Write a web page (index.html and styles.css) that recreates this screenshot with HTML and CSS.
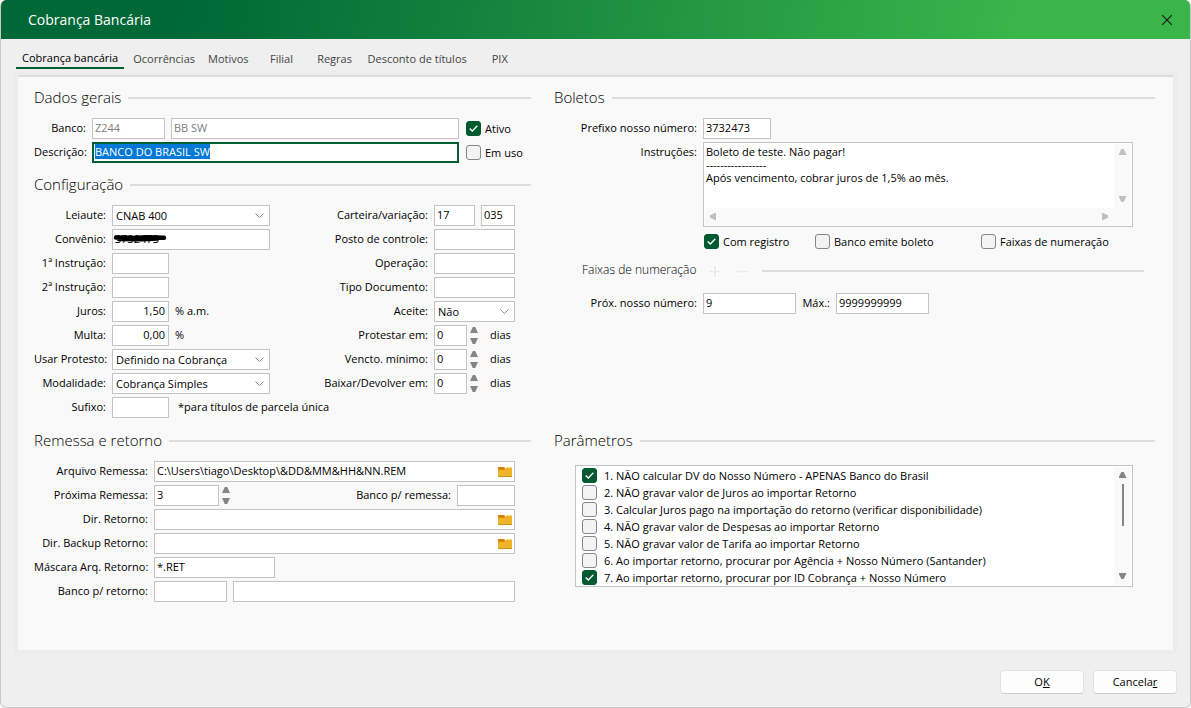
FILE: index.html
```html
<!DOCTYPE html>
<html lang="pt-BR">
<head>
  <meta charset="UTF-8">
  <meta name="viewport" content="width=device-width, initial-scale=1">
  <title>Cobrança Bancária</title>
  <link rel="stylesheet" href="styles.css">
</head>
<body>
  <div class="dialog">

    <!-- Title bar -->
    <header class="title-bar">
      <h1>Cobrança Bancária</h1>
      <button class="close" type="button" aria-label="Fechar">
        <svg width="10" height="10" viewBox="0 0 10 10"><path d="M0 0L10 10M10 0L0 10" stroke="#1c1c1c" stroke-width="1.2"/></svg>
      </button>
    </header>

    <!-- Tabs -->
    <nav class="tabs">
      <button type="button" class="tab active">Cobrança bancária</button>
      <button type="button" class="tab">Ocorrências</button>
      <button type="button" class="tab">Motivos</button>
      <button type="button" class="tab">Filial</button>
      <button type="button" class="tab">Regras</button>
      <button type="button" class="tab">Desconto de títulos</button>
      <button type="button" class="tab">PIX</button>
    </nav>

    <main class="panel">
      <div class="column">
        <section class="dados">
          <h2>Dados gerais</h2>
          <div class="rows">
            <div class="row">
              <label for="banco">Banco:</label>
              <input id="banco" class="w-73" type="text" value="Z244" disabled>
              <input class="grow" type="text" value="BB SW" aria-label="Nome do banco" disabled>
              <label class="check"><input type="checkbox" checked>Ativo</label>
            </div>
            <div class="row">
              <label for="descricao">Descrição:</label>
              <input id="descricao" class="grow" type="text" value="BANCO DO BRASIL SW">
              <label class="check"><input type="checkbox">Em uso</label>
            </div>
          </div>
        </section>

        <section class="config">
          <h2>Configuração</h2>
          <div class="split">
            <div class="rows">
              <div class="row">
                <label for="leiaute">Leiaute:</label>
                <select id="leiaute" class="w-158"><option>CNAB 400</option></select>
              </div>
              <div class="row">
                <label for="convenio">Convênio:</label>
                <div class="marked">
                  <input id="convenio" class="w-158" type="text" value="3732473">
                  <svg class="scribble" width="54" height="8" viewBox="0 0 54 8"><path d="M3 3.5L20 4L34 3.2L51 3.8M6 5L30 5.2L44 4.6" fill="none" stroke="#000" stroke-width="4.4" stroke-linecap="round"/></svg>
                </div>
              </div>
              <div class="row">
                <label for="instr1">1ª Instrução:</label>
                <input id="instr1" class="w-57" type="text">
              </div>
              <div class="row">
                <label for="instr2">2ª Instrução:</label>
                <input id="instr2" class="w-57" type="text">
              </div>
              <div class="row">
                <label for="juros">Juros:</label>
                <input id="juros" class="w-57 number" type="text" value="1,50">
                <span>% a.m.</span>
              </div>
              <div class="row">
                <label for="multa">Multa:</label>
                <input id="multa" class="w-57 number" type="text" value="0,00">
                <span>%</span>
              </div>
              <div class="row">
                <label for="protesto">Usar Protesto:</label>
                <select id="protesto" class="w-158"><option>Definido na Cobrança</option></select>
              </div>
              <div class="row">
                <label for="modalidade">Modalidade:</label>
                <select id="modalidade" class="w-158"><option>Cobrança Simples</option></select>
              </div>
              <div class="row">
                <label for="sufixo">Sufixo:</label>
                <input id="sufixo" class="w-57" type="text">
                <span class="note">*para títulos de parcela única</span>
              </div>
            </div>

            <div class="rows second">
              <div class="row">
                <label for="carteira">Carteira/variação:</label>
                <input id="carteira" class="w-41" type="text" value="17">
                <input class="grow" type="text" value="035" aria-label="Variação">
              </div>
              <div class="row">
                <label for="posto">Posto de controle:</label>
                <input id="posto" class="grow" type="text">
              </div>
              <div class="row">
                <label for="operacao">Operação:</label>
                <input id="operacao" class="grow" type="text">
              </div>
              <div class="row">
                <label for="tipo">Tipo Documento:</label>
                <input id="tipo" class="grow" type="text">
              </div>
              <div class="row">
                <label for="aceite">Aceite:</label>
                <select id="aceite" class="grow"><option>Não</option></select>
              </div>
              <div class="row">
                <label for="protestar">Protestar em:</label>
                <div class="spin">
                  <input id="protestar" class="w-33" type="text" value="0">
                  <div class="arrows">
                    <button type="button" class="up" aria-label="Aumentar"></button>
                    <button type="button" class="down" aria-label="Diminuir"></button>
                  </div>
                </div>
                <span class="unit">dias</span>
              </div>
              <div class="row">
                <label for="vencto">Vencto. mínimo:</label>
                <div class="spin">
                  <input id="vencto" class="w-33" type="text" value="0">
                  <div class="arrows">
                    <button type="button" class="up" aria-label="Aumentar"></button>
                    <button type="button" class="down" aria-label="Diminuir"></button>
                  </div>
                </div>
                <span class="unit">dias</span>
              </div>
              <div class="row">
                <label for="baixar">Baixar/Devolver em:</label>
                <div class="spin">
                  <input id="baixar" class="w-33" type="text" value="0">
                  <div class="arrows">
                    <button type="button" class="up" aria-label="Aumentar"></button>
                    <button type="button" class="down" aria-label="Diminuir"></button>
                  </div>
                </div>
                <span class="unit">dias</span>
              </div>
            </div>
          </div>
        </section>
      </div>

      <div class="column">
        <section class="boletos">
          <h2>Boletos</h2>
          <div class="rows">
            <div class="row">
              <label for="prefixo">Prefixo nosso número:</label>
              <input id="prefixo" class="w-68" type="text" value="3732473">
            </div>
            <div class="row top">
              <label for="instrucoes">Instruções:</label>
              <div class="memo">
                <textarea id="instrucoes" wrap="off">Boleto de teste. Não pagar!
-----------------
Após vencimento, cobrar juros de 1,5% ao mês.</textarea>
                <div class="scroll vertical light">
                  <button type="button" class="up" aria-label="Rolar para cima"></button>
                  <button type="button" class="down" aria-label="Rolar para baixo"></button>
                </div>
                <div class="scroll horizontal light">
                  <button type="button" class="left" aria-label="Rolar para a esquerda"></button>
                  <button type="button" class="right" aria-label="Rolar para a direita"></button>
                </div>
              </div>
            </div>
          </div>
          <div class="options">
            <label class="check"><input type="checkbox" checked>Com registro</label>
            <label class="check"><input type="checkbox">Banco emite boleto</label>
            <label class="check"><input type="checkbox">Faixas de numeração</label>
          </div>
          <h3>
            Faixas de numeração
            <svg class="tools" width="42" height="14" viewBox="0 0 42 14"><path d="M7 1V14M0 7.500H14M27 7.500H41" fill="none" stroke="#fff" stroke-width="4"/><path d="M7 2V13M1 7.500H13M28 7.500H40" fill="none" stroke="#ebebeb" stroke-width="2"/></svg>
          </h3>
          <div class="row">
            <label for="proximo">Próx. nosso número:</label>
            <input id="proximo" class="w-93" type="text" value="9">
            <label class="inline" for="maximo">Máx.:</label>
            <input id="maximo" class="w-93" type="text" value="9999999999">
          </div>
        </section>
      </div>

      <section class="remessa">
        <h2>Remessa e retorno</h2>
        <div class="rows">
          <div class="row">
            <label for="arquivo">Arquivo Remessa:</label>
            <div class="path">
              <input id="arquivo" type="text" value="C:\Users\tiago\Desktop\&amp;DD&amp;MM&amp;HH&amp;NN.REM">
              <button type="button" aria-label="Procurar arquivo"><svg width="14" height="11" viewBox="0 0 14 11"><path d="M0 1H6L7 2V5H0Z" fill="#d97f0c"/><path d="M0 4H6L8.500 1.500H14V10.200H0Z" fill="#edb52a"/><path d="M0 10.500H14" stroke="#c98f14"/></svg></button>
            </div>
          </div>
          <div class="row">
            <label for="proxima">Próxima Remessa:</label>
            <div class="spin">
              <input id="proxima" class="w-65" type="text" value="3">
              <div class="arrows">
                <button type="button" class="up" aria-label="Aumentar"></button>
                <button type="button" class="down" aria-label="Diminuir"></button>
              </div>
            </div>
            <label class="inline push" for="banco-remessa">Banco p/ remessa:</label>
            <input id="banco-remessa" class="w-58" type="text">
          </div>
          <div class="row">
            <label for="dir-retorno">Dir. Retorno:</label>
            <div class="path">
              <input id="dir-retorno" type="text">
              <button type="button" aria-label="Procurar pasta"><svg width="14" height="11" viewBox="0 0 14 11"><path d="M0 1H6L7 2V5H0Z" fill="#d97f0c"/><path d="M0 4H6L8.500 1.500H14V10.200H0Z" fill="#edb52a"/><path d="M0 10.500H14" stroke="#c98f14"/></svg></button>
            </div>
          </div>
          <div class="row">
            <label for="dir-backup">Dir. Backup Retorno:</label>
            <div class="path">
              <input id="dir-backup" type="text">
              <button type="button" aria-label="Procurar pasta"><svg width="14" height="11" viewBox="0 0 14 11"><path d="M0 1H6L7 2V5H0Z" fill="#d97f0c"/><path d="M0 4H6L8.500 1.500H14V10.200H0Z" fill="#edb52a"/><path d="M0 10.500H14" stroke="#c98f14"/></svg></button>
            </div>
          </div>
          <div class="row">
            <label for="mascara">Máscara Arq. Retorno:</label>
            <input id="mascara" class="w-121" type="text" value="*.RET">
          </div>
          <div class="row">
            <label for="banco-retorno">Banco p/ retorno:</label>
            <input id="banco-retorno" class="w-73" type="text">
            <input class="grow" type="text" aria-label="Nome do banco de retorno">
          </div>
        </div>
      </section>

      <section class="parametros">
        <h2>Parâmetros</h2>
        <div class="list">
          <div class="items">
            <label class="check"><input type="checkbox" checked>1. NÃO calcular DV do Nosso Número - APENAS Banco do Brasil</label>
            <label class="check"><input type="checkbox">2. NÃO gravar valor de Juros ao importar Retorno</label>
            <label class="check"><input type="checkbox">3. Calcular Juros pago na importação do retorno (verificar disponibilidade)</label>
            <label class="check"><input type="checkbox">4. NÃO gravar valor de Despesas ao importar Retorno</label>
            <label class="check"><input type="checkbox">5. NÃO gravar valor de Tarifa ao importar Retorno</label>
            <label class="check"><input type="checkbox">6. Ao importar retorno, procurar por Agência + Nosso Número (Santander)</label>
            <label class="check"><input type="checkbox" checked>7. Ao importar retorno, procurar por ID Cobrança + Nosso Número</label>
          </div>
          <div class="scroll vertical">
            <button type="button" class="up" aria-label="Rolar para cima"></button>
            <div class="thumb"></div>
            <button type="button" class="down" aria-label="Rolar para baixo"></button>
          </div>
        </div>
      </section>
    </main>

    <footer class="actions">
      <button type="button">O<u>K</u></button>
      <button type="button">Cancela<u>r</u></button>
    </footer>
  </div>

  <script src="script.js"></script>
</body>
</html>
```

FILE: styles.css
```css
* {
  box-sizing: border-box;
}

body {
  margin: 0;
  background: #fff;
  color: #000;
  font-family: "Open Sans", "Noto Sans", sans-serif;
  font-size: 11px;
  line-height: 13px;
}

button,
input,
select,
textarea {
  margin: 0;
  font: inherit;
  color: inherit;
}

button {
  padding: 0;
  border: 0;
  background: none;
}

.dialog {
  min-height: 100vh;
  display: flex;
  flex-direction: column;
  background: #efefef;
  border: solid #c8c8c8;
  border-width: 0 1px 1px;
  border-radius: 6px;
  overflow: hidden;
}

.title-bar {
  height: 39px;
  margin: 0 -1px;
  padding: 0 19px 0 28px;
  display: flex;
  align-items: center;
  justify-content: space-between;
  background: linear-gradient(100deg, #006736 15%, #39b54a 85%);
}

.title-bar h1 {
  margin: 0;
  color: #fff;
  font-size: 14px;
  line-height: 20px;
  font-weight: 400;
}

.close svg {
  display: block;
}

/* Tabs */
.tabs {
  display: flex;
  gap: 1px;
  padding: 9px 15px 0;
  height: 36px;
}

.tab {
  min-width: 52px;
  height: 21px;
  padding: 0 6px;
  color: #444;
}

.tab.active {
  margin-right: 2px;
  color: #000;
  border-bottom: 2px solid #005f33;
}

/* Panel */
.panel {
  flex: 1;
  margin: 0 17px;
  padding: 9px 18px 16px 16px;
  display: grid;
  grid-template-columns: 497px minmax(0, 1fr);
  grid-template-rows: auto 1fr;
  gap: 11px 23px;
  background: #f9f9f9;
  border-top: 2px solid #ddd;
  box-shadow: 0 0 0 4px #ececec;
}

.column {
  display: flex;
  flex-direction: column;
  gap: 10px;
}

h2,
h3 {
  margin: 0 0 8px;
  display: flex;
  gap: 7px;
  height: 24px;
  font-size: 15px;
  line-height: 22px;
  font-weight: 300;
}

h3 {
  font-size: 12px;
  margin: 10px 11px 10px 28px;
}

h2::after,
h3::after {
  content: "";
  flex: 1;
  height: 2px;
  margin-top: 11px;
  background: #ddd;
}

.rows {
  display: flex;
  flex-direction: column;
  gap: 3px;
}

.row {
  display: flex;
  align-items: center;
  gap: 6px;
  min-height: 21px;
}

.row > label,
.row > span {
  flex: none;
  padding-bottom: 2px;
  text-align: right;
  white-space: nowrap;
}

.row.top {
  align-items: flex-start;
}

.row.top > label {
  padding-top: 3px;
}

.dados .row > label:first-child { width: 52px; }
.config .row > label:first-child { width: 72px; }
.config .second .row > label:first-child { width: 106px; }
.boletos .row > label:first-child { width: 143px; }
.remessa .row > label:first-child { width: 114px; }

.row .push {
  margin-left: auto;
}

.boletos .row .inline {
  width: 28px;
}

.split {
  display: flex;
  justify-content: space-between;
}

.split .rows {
  flex: none;
}

.split .second {
  width: 193px;
}

.split,
.remessa .rows {
  padding-right: 16px;
}

/* the note on the last row runs past the selects */
.split .rows:first-child {
  width: 236px;
}

.split .rows:first-child input {
  flex: none;
}

.note {
  padding-left: 3px;
}

.unit {
  padding-left: 6px;
}

/* Fields */
input[type="text"],
select {
  height: 21px;
  min-width: 0;
  padding: 0 3px 2px 2px;
  background: #fff;
  border: 1px solid #c3c3c3;
  border-radius: 0;
  outline: 0;
}

input[type="text"]:disabled {
  color: #808080;
}

input[type="text"]:focus {
  padding: 0 2px 2px 1px;
  border: 2px solid #005f33;
}

input::selection {
  background: #0078d7;
  color: #fff;
}

select {
  padding: 0 20px 0 3px;
  appearance: none;
  background: #fff url("data:image/svg+xml,%3Csvg xmlns='http://www.w3.org/2000/svg' width='9' height='6'%3E%3Cpath d='M.5 .5L4.500 4.500L8.500 .5' fill='none' stroke='%23888'/%3E%3C/svg%3E") no-repeat right 5px center;
}

.number {
  text-align: right;
}

.grow { flex: 1; }
.w-33 { width: 33px; }
.w-41 { width: 41px; }
.w-57 { width: 57px; }
.w-58 { width: 58px; }
.w-65 { width: 65px; }
.w-68 { width: 68px; }
.w-73 { width: 73px; }
.w-93 { width: 93px; }
.w-121 { width: 121px; }
.w-158 { width: 158px; }

.marked {
  position: relative;
  display: flex;
}

.scribble {
  position: absolute;
  left: 1px;
  top: 5px;
}

.path {
  flex: 1;
  display: flex;
  background: #fff;
  border: 1px solid #c3c3c3;
}

.path input[type="text"] {
  flex: 1;
  height: 19px;
  border: 0;
}

.path button {
  width: 16px;
}

.path svg {
  display: block;
}

/* Arrow buttons */
.up, .down, .left, .right {
  width: 8px;
  height: 6px;
  background: #868686;
}

.left, .right {
  width: 6px;
  height: 8px;
}

.up { clip-path: polygon(35% 0, 65% 0, 100% 100%, 0 100%); }
.down { clip-path: polygon(0 0, 100% 0, 65% 100%, 35% 100%); }
.left { clip-path: polygon(0 35%, 100% 0, 100% 100%, 0 65%); }
.right { clip-path: polygon(0 0, 100% 35%, 100% 65%, 0 100%); }

.spin {
  display: flex;
  gap: 3px;
}

.arrows {
  display: flex;
  flex-direction: column;
  justify-content: space-between;
  padding: 2px 0;
}

.scroll {
  display: flex;
  background: #f9f9f9;
}

.vertical {
  width: 17px;
  flex-direction: column;
  align-items: center;
  padding: 5px 0 6px;
}

.horizontal {
  grid-column: 1 / 3;
  justify-content: space-between;
  align-items: center;
  padding: 0 23px 0 5px;
}

.vertical .down {
  margin-top: auto;
}

.light button {
  background: #bfbfbf;
}

.thumb {
  width: 2px;
  height: 42px;
  margin-top: 6px;
  background: #868686;
}

/* Check boxes */
.check {
  display: flex;
  align-items: center;
  gap: 4px;
  white-space: nowrap;
}

.check input {
  flex: none;
  appearance: none;
  width: 15px;
  height: 15px;
  background: #f3f3f3;
  border: 1px solid #868686;
  border-radius: 3px;
}

.check input:checked {
  border-color: #005a30;
  background: #005a30 url("data:image/svg+xml,%3Csvg xmlns='http://www.w3.org/2000/svg' width='9' height='7'%3E%3Cpath d='M.7 3.500L3.300 6L8.300 .8' fill='none' stroke='%23fff' stroke-width='1.300'/%3E%3C/svg%3E") no-repeat center;
}

.dados .row .check {
  width: 65px;
  margin-left: 1px;
  padding: 0;
}

/* Boletos */
.memo {
  flex: 1;
  height: 85px;
  margin-right: 22px;
  padding: 1px;
  display: grid;
  grid-template-columns: 1fr 17px;
  grid-template-rows: 1fr 17px;
  background: #fff;
  border: 1px solid #c3c3c3;
}

.memo textarea {
  padding: 1px;
  border: 0;
  outline: 0;
  resize: none;
  overflow: hidden;
  background: #fff;
}

.options {
  display: flex;
  padding: 7px 0 0 150px;
}

.options .check:nth-child(1) { width: 111px; }
.options .check:nth-child(2) { width: 166px; }

.tools {
  margin: 5px 5px 0;
}

/* Parameter list */
.list {
  height: 122px;
  margin: 12px 22px 0 21px;
  padding: 1px;
  display: flex;
  justify-content: space-between;
  background: #fff;
  border: 1px solid #c3c3c3;
}

.items {
  padding-left: 5px;
  overflow: hidden;
}

.items .check {
  height: 17px;
  gap: 7px;
}

/* Footer */
.actions {
  display: flex;
  justify-content: flex-end;
  gap: 9px;
  padding: 20px 13px 13px;
}

.actions button {
  width: 84px;
  height: 24px;
  padding-bottom: 1px;
  background: #fdfdfd;
  border: 1px solid #e2e2e2;
  border-bottom-color: #ccc;
  border-radius: 4px;
}
```

FILE: script.js
```javascript
// start with the description selected
const descricao = document.getElementById('descricao');
descricao.focus();
descricao.select();
```
